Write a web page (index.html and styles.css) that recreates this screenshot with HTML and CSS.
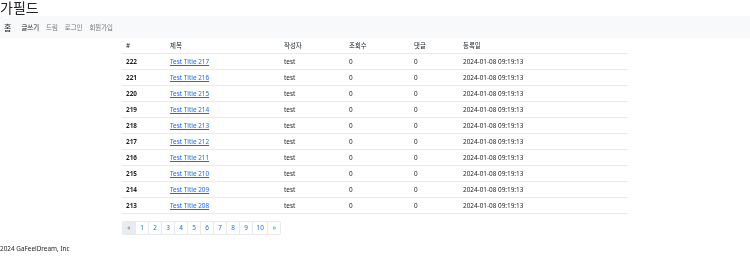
FILE: index.html
```html
<!DOCTYPE html>
<html lang="ko">
<head>
    <meta charset="UTF-8">
    <title>가필드</title>
    <link rel="stylesheet" href="styles.css">
</head>
<body>
<div class="wrap">
    <h1 class="title">가필드</h1>
    <nav class="navbar">
        <a class="brand" href="#">홈</a>
        <a class="nav-link active" href="#">글쓰기</a>
        <a class="nav-link" href="#">드림</a>
        <a class="nav-link" href="#">로그인</a>
        <a class="nav-link" href="#">회원가입</a>
    </nav>
    <div class="board">
        <table class="board-table">
            <thead>
                <tr>
                    <th class="c-no">#</th>
                    <th class="c-title">제목</th>
                    <th class="c-writer">작성자</th>
                    <th class="c-view">조회수</th>
                    <th class="c-reply">댓글</th>
                    <th class="c-date">등록일</th>
                </tr>
            </thead>
            <tbody>
                <tr><th>222</th><td><a href="#">Test Title 217</a></td><td>test</td><td>0</td><td>0</td><td>2024-01-08 09:19:13</td></tr>
                <tr><th>221</th><td><a href="#">Test Title 216</a></td><td>test</td><td>0</td><td>0</td><td>2024-01-08 09:19:13</td></tr>
                <tr><th>220</th><td><a href="#">Test Title 215</a></td><td>test</td><td>0</td><td>0</td><td>2024-01-08 09:19:13</td></tr>
                <tr><th>219</th><td><a href="#">Test Title 214</a></td><td>test</td><td>0</td><td>0</td><td>2024-01-08 09:19:13</td></tr>
                <tr><th>218</th><td><a href="#">Test Title 213</a></td><td>test</td><td>0</td><td>0</td><td>2024-01-08 09:19:13</td></tr>
                <tr><th>217</th><td><a href="#">Test Title 212</a></td><td>test</td><td>0</td><td>0</td><td>2024-01-08 09:19:13</td></tr>
                <tr><th>216</th><td><a href="#">Test Title 211</a></td><td>test</td><td>0</td><td>0</td><td>2024-01-08 09:19:13</td></tr>
                <tr><th>215</th><td><a href="#">Test Title 210</a></td><td>test</td><td>0</td><td>0</td><td>2024-01-08 09:19:13</td></tr>
                <tr><th>214</th><td><a href="#">Test Title 209</a></td><td>test</td><td>0</td><td>0</td><td>2024-01-08 09:19:13</td></tr>
                <tr><th>213</th><td><a href="#">Test Title 208</a></td><td>test</td><td>0</td><td>0</td><td>2024-01-08 09:19:13</td></tr>
            </tbody>
        </table>
        <ul class="pagination">
            <li class="page disabled"><span>&laquo;</span></li>
            <li class="page"><a href="#">1</a></li>
            <li class="page"><a href="#">2</a></li>
            <li class="page"><a href="#">3</a></li>
            <li class="page"><a href="#">4</a></li>
            <li class="page"><a href="#">5</a></li>
            <li class="page"><a href="#">6</a></li>
            <li class="page"><a href="#">7</a></li>
            <li class="page"><a href="#">8</a></li>
            <li class="page"><a href="#">9</a></li>
            <li class="page"><a href="#">10</a></li>
            <li class="page"><a href="#">&raquo;</a></li>
        </ul>
    </div>
    <footer class="footer">2024 GaFeelDream, Inc</footer>
</div>
</body>
</html>
```

FILE: styles.css
```css
body {
    margin: 0;
    font-family: "Noto Sans", "Noto Sans CJK KR", sans-serif;
    font-size: 6.4px;
    color: #212529;
    background-color: #ffffff;
}
/* grayscale antialiasing for the tiny text */
.wrap {
    will-change: transform;
}
.title {
    margin: 0;
    padding-top: 1px;
    height: 15px;
    font-size: 14px;
    line-height: 14px;
    font-weight: 400;
}
.navbar {
    display: flex;
    align-items: center;
    gap: 7px;
    height: 22px;
    padding: 0 4px;
    background-color: #f8f9fa;
}
.navbar a {
    text-decoration: none;
}
.brand {
    font-size: 8px;
    color: #212529;
    margin-right: 3px;
}
.nav-link {
    color: rgba(0, 0, 0, 0.55);
}
.nav-link.active {
    color: rgba(0, 0, 0, 0.9);
}
.board {
    width: 506px;
    margin: 0 auto;
}
.board-table {
    width: 506px;
    border-collapse: collapse;
    table-layout: fixed;
}
.board-table th, .board-table td {
    height: 15px;
    padding: 0 4px;
    text-align: left;
    border-bottom: 1px solid #e8eaed;
    line-height: 9px;
}
.board-table thead th {
    font-weight: 400;
}
.board-table tbody th {
    font-weight: 700;
}
.board-table a {
    color: #0d6efd;
}
.c-no { width: 36px; }
.c-title { width: 106px; }
.c-writer { width: 57px; }
.c-view { width: 57px; }
.c-reply { width: 41px; }
.pagination {
    display: flex;
    list-style: none;
    margin: 7px 0 0;
    padding: 0;
}
.page a, .page span {
    display: block;
    height: 12px;
    line-height: 12px;
    padding: 0 3.5px;
    min-width: 5px;
    text-align: center;
    color: #0d6efd;
    text-decoration: none;
    background-color: #ffffff;
    border: 1px solid #e8eaed;
    margin-left: -1px;
}
.page:first-child span {
    margin-left: 0;
    border-radius: 2px 0 0 2px;
}
.page:last-child a {
    border-radius: 0 2px 2px 0;
}
.page.disabled span {
    color: #6c757d;
    background-color: #e9ecef;
}
.footer {
    margin-top: 9px;
    color: #212529;
}
```
